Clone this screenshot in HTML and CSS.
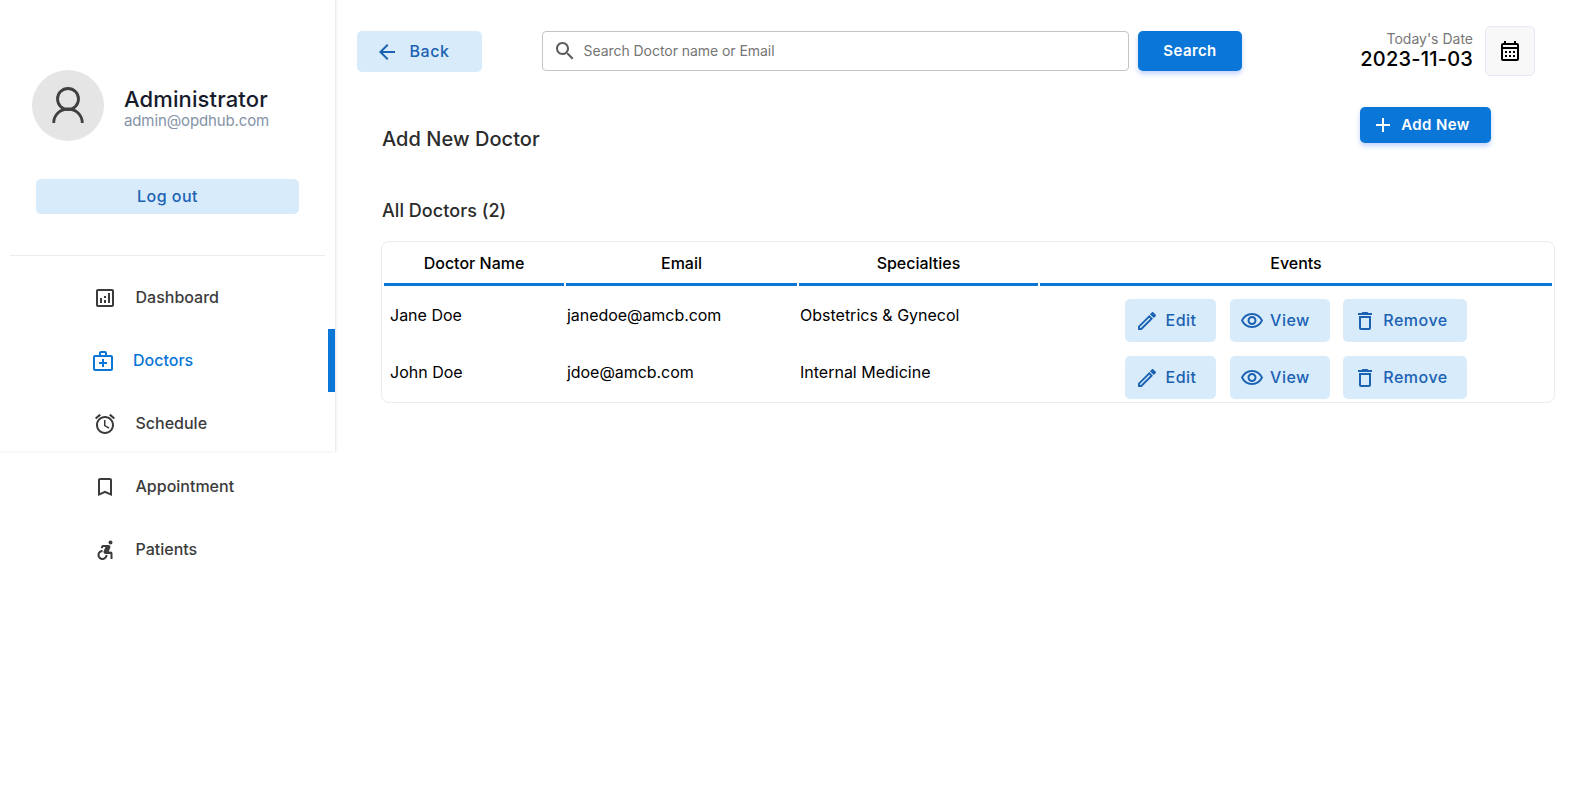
FILE: index.html
```html
<!DOCTYPE html>
<html lang="en">
<head>
<meta charset="utf-8">
<title>Doctors</title>
<link rel="stylesheet" href="styles.css">
</head>
<body>
<svg class="sprite" aria-hidden="true">
  <symbol id="i-edit" viewBox="0 0 24 24"><path fill="none" stroke="currentColor" stroke-width="1.9" d="M4 20v-2.300L14.300 7.400l2.300 2.300L6.300 20z"/><path d="M14.900 5.200l1.800-1.800c.5-.5 1.200-.5 1.700 0l2.200 2.200c.5.5.5 1.200 0 1.700l-1.800 1.800z"/></symbol>
  <symbol id="i-view" viewBox="0 0 24 24"><path d="M12 6c3.790 0 7.170 2.130 8.820 5.500C19.170 14.870 15.790 17 12 17s-7.170-2.130-8.820-5.500C4.830 8.130 8.210 6 12 6m0-2C7 4 2.730 7.110 1 11.500 2.730 15.890 7 19 12 19s9.270-3.110 11-7.500C21.270 7.110 17 4 12 4zm0 5c1.380 0 2.500 1.120 2.500 2.500S13.380 14 12 14s-2.500-1.120-2.500-2.500S10.620 9 12 9m0-2c-2.480 0-4.500 2.020-4.500 4.500S9.520 16 12 16s4.500-2.020 4.500-4.500S14.480 7 12 7z"/></symbol>
  <symbol id="i-remove" viewBox="0 0 24 24"><path d="M6 19c0 1.100.9 2 2 2h8c1.100 0 2-.9 2-2V7H6v12zM8 9h8v10H8V9zm7.500-5l-1-1h-5l-1 1H5v2h14V4h-3.500z"/></symbol>
</svg>
<div class="layout">
  <aside class="sidebar">
    <div class="profile">
      <div class="avatar"><svg viewBox="0 0 72 71"><circle cx="36" cy="29" r="10.500"/><path d="M21.700 53C21.700 45 28 39 36 39S50.300 45 50.300 53"/></svg></div>
      <div class="profile-text"><div class="profile-name">Administrator</div><div class="profile-mail">admin@opdhub.com</div></div>
    </div>
    <button class="btn soft logout"><span>Log out</span></button>
    <div class="rule"></div>
    <nav class="menu">
      <a class="item"><svg class="icon" viewBox="0 0 24 24"><path d="M19 3H5c-1.100 0-2 .9-2 2v14c0 1.100.9 2 2 2h14c1.100 0 2-.9 2-2V5c0-1.100-.9-2-2-2zm0 16H5V5h14v14zM7 12h2v5H7zm8-5h2v10h-2zm-4 7h2v3h-2zm0-4h2v2h-2z"/></svg><span>Dashboard</span></a>
      <a class="item active"><svg class="icon" viewBox="0 0 24 24"><path d="M20 6h-4V4c0-1.100-.9-2-2-2h-4c-1.100 0-2 .9-2 2v2H4c-1.100 0-2 .9-2 2v12c0 1.100.9 2 2 2h16c1.100 0 2-.9 2-2V8c0-1.100-.9-2-2-2zM10 4h4v2h-4V4zm10 16H4V8h16v12zM13 10h-2v3H8v2h3v3h2v-3h3v-2h-3z"/></svg><span>Doctors</span></a>
      <a class="item"><svg class="icon" viewBox="0 0 24 24"><path d="M22 5.720l-4.600-3.860-1.290 1.530 4.600 3.860L22 5.720zM7.880 3.390L6.600 1.860 2 5.710l1.290 1.530 4.590-3.850zM12.500 8H11v6l4.750 2.850.75-1.230-4-2.370V8zM12 4c-4.970 0-9 4.030-9 9s4.020 9 9 9 9-4.030 9-9-4.030-9-9-9zm0 16c-3.870 0-7-3.130-7-7s3.130-7 7-7 7 3.130 7 7-3.130 7-7 7z"/></svg><span>Schedule</span></a>
      <a class="item"><svg class="icon" viewBox="0 0 24 24"><path d="M17 3H7c-1.100 0-2 .9-2 2v16l7-3 7 3V5c0-1.100-.9-2-2-2zm0 15l-5-2.180L7 18V5h10v13z"/></svg><span>Appointment</span></a>
      <a class="item"><svg class="icon" viewBox="0.500 0 24 24"><circle cx="18" cy="4.540" r="2"/><path d="M15 17h-2c0 1.650-1.350 3-3 3s-3-1.350-3-3 1.350-3 3-3v-2c-2.760 0-5 2.240-5 5s2.240 5 5 5 5-2.240 5-5zm3-3.500h-1.860l1.670-3.670C18.420 8.500 17.440 7 15.960 7h-5.200c-.81 0-1.540.47-1.870 1.200L8.220 10l1.920.53.65-1.530H13l-1.830 4.100c-.6 1.330.39 2.900 1.850 2.900H18v5h2v-5.500c0-1.100-.9-2-2-2z"/></svg><span>Patients</span></a>
    </nav>
  </aside>
  <main class="main">
    <header class="topbar">
      <button class="btn soft back"><svg class="icon" viewBox="0 0 24 24"><path d="M20 11H7.830l5.590-5.590L12 4l-8 8 8 8 1.410-1.410L7.830 13H20v-2z"/></svg><span>Back</span></button>
      <label class="search"><svg class="icon" viewBox="0 0 24 24"><path d="M15.500 14h-.79l-.28-.27C15.410 12.590 16 11.110 16 9.500 16 5.910 13.090 3 9.500 3S3 5.910 3 9.500 5.910 16 9.500 16c1.610 0 3.090-.59 4.230-1.570l.27.28v.79l5 4.990L20.490 19l-4.990-5zm-6 0C7.010 14 5 11.990 5 9.500S7.010 5 9.500 5 14 7.010 14 9.500 11.990 14 9.500 14z"/></svg><input type="text" placeholder="Search Doctor name or Email"></label>
      <button class="btn primary search-btn"><span>Search</span></button>
      <div class="today"><div class="today-label">Today's Date</div><div class="today-value">2023-11-03</div></div>
      <button class="calendar"><svg class="icon" viewBox="0 0 24 24"><path d="M7 12h2v2H7zm0 4h2v2H7zm4-4h2v2h-2zm0 4h2v2h-2zm4-4h2v2h-2zm0 4h2v2h-2z"/><path fill-rule="evenodd" d="M5 22h14c1.100 0 2-.9 2-2V6c0-1.100-.9-2-2-2h-1V2h-2v2H8V2H6v2H5c-1.100 0-2 .9-2 2v14c0 1.100.9 2 2 2zM5 6h14v2H5zM5 10h14v10H5z"/></svg></button>
    </header>
    <div class="add-row">
      <h1>Add New Doctor</h1>
      <button class="btn primary add"><svg class="icon" viewBox="0 0 24 24"><path d="M19 13h-6v6h-2v-6H5v-2h6V5h2v6h6v2z"/></svg><span>Add New</span></button>
    </div>
    <h2>All Doctors (2)</h2>
    <section class="table">
      <div class="row head"><div>Doctor Name</div><div>Email</div><div>Specialties</div><div>Events</div></div>
      <div class="row">
        <div class="cell name">Jane Doe</div><div class="cell email">janedoe@amcb.com</div><div class="cell">Obstetrics &amp; Gynecol</div>
        <div class="events"><button class="btn soft edit"><svg class="icon"><use href="#i-edit"/></svg><span>Edit</span></button><button class="btn soft view"><svg class="icon"><use href="#i-view"/></svg><span>View</span></button><button class="btn soft remove"><svg class="icon"><use href="#i-remove"/></svg><span>Remove</span></button></div>
      </div>
      <div class="row">
        <div class="cell name">John Doe</div><div class="cell email">jdoe@amcb.com</div><div class="cell">Internal Medicine</div>
        <div class="events"><button class="btn soft edit"><svg class="icon"><use href="#i-edit"/></svg><span>Edit</span></button><button class="btn soft view"><svg class="icon"><use href="#i-view"/></svg><span>View</span></button><button class="btn soft remove"><svg class="icon"><use href="#i-remove"/></svg><span>Remove</span></button></div>
      </div>
    </section>
  </main>
</div>
</body>
</html>
```
FILE: styles.css
```css
* { box-sizing: border-box; }
body { margin: 0; background: #fff; color: #000; font-family: Inter, "Liberation Sans", sans-serif; font-size: 16px; }
.sprite { display: none; }
.icon { width: 24px; height: 24px; flex: none; fill: currentColor; }
.layout { display: flex; align-items: flex-start; min-height: 100vh; }

.sidebar { width: 336px; height: 451px; flex: none; border-right: 1px solid #ebebeb; box-shadow: 1px 1px 0 1px #f9f9f9; }
.profile { display: flex; align-items: center; gap: 20px; padding: 70px 0 0 32px; }
.avatar { width: 72px; height: 71px; border-radius: 50%; background: #e5e5e5; }
.avatar svg { display: block; width: 72px; height: 71px; fill: none; stroke: #404040; stroke-width: 2.8; }
.profile-text { padding-top: 4px; }
.profile-name { font-size: 22px; font-weight: 500; line-height: 26px; letter-spacing: .12px; color: #161c2d; }
.profile-mail { font-size: 15px; line-height: 18px; letter-spacing: -.12px; color: #8492a6; }
.btn { display: flex; align-items: center; justify-content: center; border: 0; border-radius: 5px; padding: 0; font: 500 16px/20px Inter, "Liberation Sans", sans-serif; letter-spacing: .5px; }
.btn span, .item span { padding-bottom: 2px; }
.soft { background: #d8ebfa; color: #1b62b3; }
.primary { background: #0a76d8; color: #fff; font-size: 15px; font-weight: 600; letter-spacing: .4px; box-shadow: 0 3px 5px rgba(57, 108, 240, .3); }
.primary span { padding-bottom: 0; }
.logout { width: 263px; height: 35px; margin: 38px 0 0 36px; }
.rule { height: 1px; margin: 41px 10px 10px; background: #ebebeb; }
.menu { display: flex; flex-direction: column; }
.item { display: flex; align-items: center; gap: 18.5px; height: 63px; padding-left: 93px; font-weight: 500; color: #3b3b3b; }
.active { padding-left: 91px; gap: 18px; border-right: 7px solid #0a76d8; color: #0a76d8; }

.main { flex: 1; padding-left: 21px; }
.topbar { display: flex; align-items: flex-start; padding-top: 26px; }
.back { width: 125px; height: 41px; margin-top: 5px; padding-right: 15px; gap: 11px; }
.search { display: flex; align-items: center; width: 587px; height: 40px; margin: 5px 9px 0 60px; padding-left: 10px; gap: 6.5px; border: 1px solid #c4c4c4; border-radius: 4px; color: #5c5c5c; }
.search input { flex: 1; border: 0; outline: 0; padding: 0; background: none; font: 400 14px/18px Inter, sans-serif; letter-spacing: -.05px; }
.search input::placeholder { color: #757575; }
.search-btn { width: 104px; height: 40px; margin-top: 5px; }
.today { margin-left: auto; padding-top: 4px; text-align: right; }
.today-label { font-size: 14px; line-height: 18px; color: #777; }
.today-value { font-size: 20px; font-weight: 500; line-height: 22px; letter-spacing: .2px; }
.calendar { display: flex; align-items: center; justify-content: center; width: 50px; height: 50px; margin: 0 60px 0 12px; padding: 0; border: 1px solid #e3e9f7; border-radius: 5px; background: #f8f8f8; color: #000; }
.add-row { display: flex; align-items: flex-start; justify-content: space-between; padding: 31px 104px 0 25px; }
.add { width: 131px; height: 36px; gap: 6px; padding-right: 10px; }
h1 { margin: 20px 0 0; font-size: 20px; line-height: 24px; font-weight: 500; letter-spacing: .05px; color: #2b2b2b; }
h2 { margin: 48px 0 0 25px; font-size: 18px; line-height: 24px; font-weight: 500; letter-spacing: .05px; color: #2b2b2b; }
.table { width: 1174px; height: 162px; margin: 18px 0 0 24px; padding: 0 2px; border: 1px solid #ebebeb; border-radius: 8px; }
.row { display: grid; grid-template-columns: 180px 231px 239px 512px; column-gap: 2px; height: 57px; }
.head { height: 44px; font-weight: 500; text-align: center; }
.head > div { padding-top: 10px; line-height: 22px; border-bottom: 3px solid #0a76d8; }
.cell { padding: 19px 0 0 1px; line-height: 20px; }
.name { padding-left: 6px; }
.email { letter-spacing: -.05px; }
.events { display: flex; padding: 13px 0 0 85px; }
.events .btn { height: 43px; }
.edit { width: 91px; gap: 6px; margin-right: 14px; padding-right: 9px; }
.view { width: 100px; gap: 6px; margin-right: 13px; padding-right: 10px; }
.remove { width: 124px; gap: 6px; padding-right: 9px; }
```
